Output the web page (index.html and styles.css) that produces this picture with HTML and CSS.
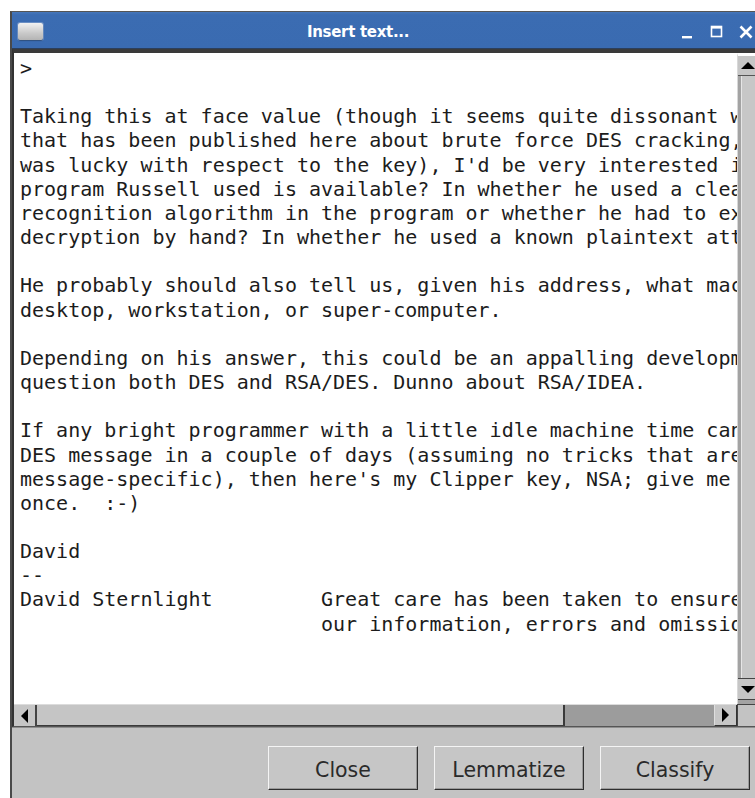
FILE: index.html
```html
<!DOCTYPE html>
<html lang="en">
<head>
<meta charset="utf-8">
<title>Insert text...</title>
<link rel="stylesheet" href="styles.css">
</head>
<body>
<div class="window">
  <div class="titlebar">
    <div class="app-icon"></div>
    <div class="title">Insert text...</div>
    <div class="controls">
      <svg class="ctl" width="14" height="14" viewBox="0 0 14 14"><rect x="1" y="11" width="10" height="2.4" fill="#fff"/></svg>
      <svg class="ctl" width="14" height="14" viewBox="0 0 14 14"><rect x="1.5" y="1.5" width="10" height="10" fill="none" stroke="#fff" stroke-width="1.6"/><rect x="1" y="1" width="11" height="2.6" fill="#fff"/></svg>
      <svg class="ctl" width="14" height="14" viewBox="0 0 14 14"><path d="M1.5 1.5 L12.5 12.5 M12.5 1.5 L1.5 12.5" stroke="#fff" stroke-width="2.6"/></svg>
    </div>
  </div>
  <div class="frame">
    <div class="textview">&gt;

Taking this at face value (though it seems quite dissonant with much
that has been published here about brute force DES cracking, unless Russell
was lucky with respect to the key), I'd be very interested in whether the
program Russell used is available? In whether he used a clear-text
recognition algorithm in the program or whether he had to examine each
decryption by hand? In whether he used a known plaintext attack?

He probably should also tell us, given his address, what machine he used--
desktop, workstation, or super-computer.

Depending on his answer, this could be an appalling development calling into
question both DES and RSA/DES. Dunno about RSA/IDEA.

If any bright programmer with a little idle machine time can crack a single
DES message in a couple of days (assuming no tricks that are
message-specific), then here's my Clipper key, NSA; give me the chip at
once.  :-)

David
--
David Sternlight         Great care has been taken to ensure the accuracy of
                         our information, errors and omissions excepted.
</div>
    <div class="vscroll">
      <div class="sbtn up"><span class="tri tri-up"></span></div>
      <div class="vthumb"></div>
      <div class="sbtn down"><span class="tri tri-down"></span></div>
    </div>
    <div class="hscroll">
      <div class="sbtn left"><span class="tri tri-left"></span></div>
      <div class="hthumb"></div>
      <div class="htrack"></div>
      <div class="sbtn right"><span class="tri tri-right"></span></div>
    </div>
    <div class="corner"></div>
  </div>
  <div class="actions">
    <button class="btn">Close</button>
    <button class="btn">Lemmatize</button>
    <button class="btn">Classify</button>
  </div>
</div>
</body>
</html>
```
FILE: styles.css
```css
html, body {
  margin: 0;
  padding: 0;
}

body {
  width: 755px;
  height: 798px;
  overflow: hidden;
  background: #ffffff;
}

.window {
  margin: 11px 0 0 10px;
  width: 747px;
  height: 800px;
  border-left: 2px solid #4a4a4a;
  border-top: 1px solid #555555;
  background: #c3c3c3;
  display: flex;
  flex-direction: column;
}

/* title bar */
.titlebar {
  height: 37px;
  flex: none;
  display: flex;
  align-items: center;
  background: linear-gradient(#4677bb 0, #3b6cb2 3px, #3a6bb1 100%);
  border-bottom: 1px solid #2c3f5c;
  box-sizing: border-box;
}

.app-icon {
  width: 25px;
  height: 17px;
  margin: 2px 0 0 6px;
  border-radius: 2px;
  background: linear-gradient(#f2f2f2, #c9c9c9 60%, #b4b4b4);
  box-shadow: 0 1px 1px #2b4c7c, 0 0 0 1px #6b8fc4;
  flex: none;
}

.title {
  flex: 1;
  text-align: center;
  color: #ffffff;
  font-family: "DejaVu Sans", sans-serif;
  font-weight: bold;
  font-size: 15px;
  letter-spacing: -0.3px;
  padding: 3px 0 0 2px;
}

.controls {
  display: flex;
  gap: 15px;
  align-items: center;
  width: 88px;
  box-sizing: border-box;
  padding: 3px 0 0 10px;
  flex: none;
}

.ctl {
  display: block;
}

/* text frame with scrollbars */
.frame {
  flex: none;
  display: grid;
  grid-template-columns: 723px 20px;
  grid-template-rows: 651px 22px;
  border-top: 4px solid #3a3a3a;
  border-left: 2px solid #333333;
  border-bottom: 1px solid #555555;
  background: #ffffff;
}

.textview {
  grid-column: 1;
  grid-row: 1;
  overflow: hidden;
  white-space: pre;
  padding: 3px 0 0 6px;
  font-family: "DejaVu Sans Mono", monospace;
  font-size: 20px;
  line-height: 24.15px;
  color: #1c1c1c;
  background: #ffffff;
}

.vscroll {
  grid-column: 2;
  grid-row: 1;
  display: flex;
  flex-direction: column;
  background: #a3a3a3;
  border-top: 3px solid #ffffff;
  border-left: 1px solid #d8d8d8;
}

.sbtn {
  flex: none;
  display: flex;
  align-items: center;
  justify-content: center;
  background: #c6c6c6;
  box-sizing: border-box;
}

.sbtn.up {
  height: 20px;
  border-bottom: 1px solid #555555;
}

.sbtn.down {
  height: 22px;
  border-top: 1px solid #444444;
  border-bottom: 1px solid #444444;
  margin-bottom: 4px;
}

.vthumb {
  flex: 1;
  margin-left: 3px;
  background: #c7c7c7;
  border-left: 1px solid #e6e6e6;
}

.hscroll {
  grid-column: 1;
  grid-row: 2;
  display: flex;
  background: #9c9c9c;
  border-top: 1px solid #dcdcdc;
}

.sbtn.left {
  width: 23px;
  border-right: 2px solid #444444;
}

.sbtn.right {
  width: 23px;
  border-right: 1px solid #333333;
  border-bottom: 1px solid #333333;
  border-left: 1px solid #dedede;
}

.hthumb {
  width: 528px;
  flex: none;
  background: #c5c5c5;
  border-right: 2px solid #3a3a3a;
  border-bottom: 1px solid #3a3a3a;
  box-sizing: border-box;
}

.htrack {
  flex: 1;
}

.corner {
  grid-column: 2;
  grid-row: 2;
  background: #c3c3c3;
  border-left: 1px solid #444444;
  border-top: 1px solid #444444;
}

.tri {
  width: 0;
  height: 0;
  display: block;
}

.tri-up {
  border-left: 7px solid transparent;
  border-right: 7px solid transparent;
  border-bottom: 7px solid #000000;
}

.tri-down {
  border-left: 7px solid transparent;
  border-right: 7px solid transparent;
  border-top: 7px solid #000000;
}

.tri-left {
  border-top: 7px solid transparent;
  border-bottom: 7px solid transparent;
  border-right: 7px solid #000000;
}

.tri-right {
  border-top: 7px solid transparent;
  border-bottom: 7px solid transparent;
  border-left: 7px solid #000000;
}

/* button row */
.actions {
  flex: 1;
  display: flex;
  justify-content: flex-end;
  align-items: flex-start;
  gap: 16px;
  padding: 18px 9px 0 0;
  border-top: 1px solid #8e8e8e;
  background: #c3c3c3;
}

.btn {
  width: 150px;
  height: 44px;
  background: #c6c6c6;
  border: 1px solid;
  border-color: #f4f4f4 #2e2e2e #2e2e2e #f4f4f4;
  box-shadow: inset -1px -1px 0 #9a9a9a;
  font-family: "DejaVu Sans", sans-serif;
  font-size: 20.5px;
  color: #2a2a2a;
  padding: 3px 0 0 0;
}
```
